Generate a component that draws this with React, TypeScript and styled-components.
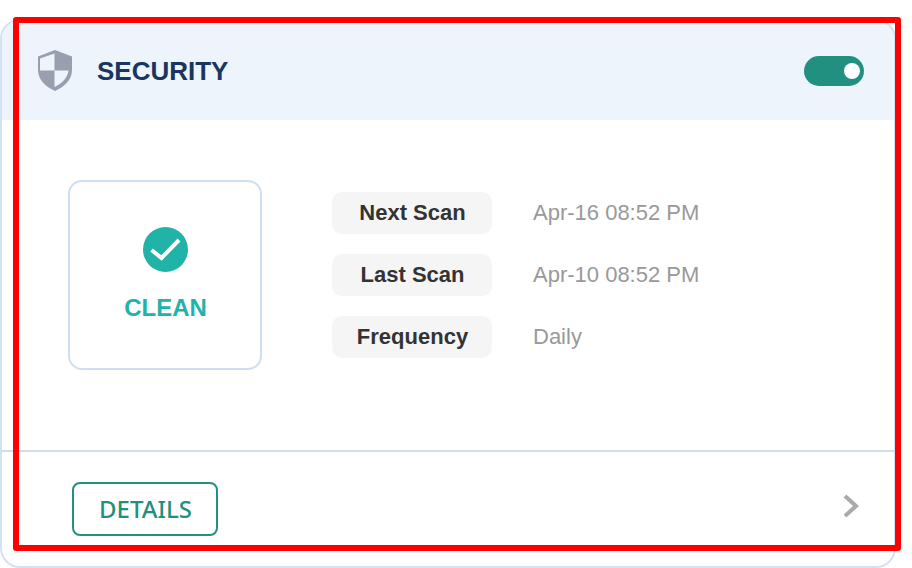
import React, { FC } from 'react';
import styled, { createGlobalStyle } from 'styled-components';

const GlobalStyle = createGlobalStyle`
  html, body {
    margin: 0;
    padding: 0;
    background: #fff;
    overflow: hidden;
  }
  * {
    box-sizing: border-box;
  }
`;

const Page = styled.div`
  position: relative;
  width: 912px;
  height: 568px;
  padding-top: 19px;
  font-family: 'Liberation Sans', Arial, sans-serif;
`;

const Card = styled.section`
  width: 896px;
  height: 549px;
  display: flex;
  flex-direction: column;
  overflow: hidden;
  border: 2px solid #d3e2f2;
  border-radius: 20px;
`;

const Header = styled.header`
  height: 99px;
  flex-shrink: 0;
  display: flex;
  align-items: center;
  padding: 0 30px 0 36px;
  background: #edf4fc;
`;

const ShieldIcon = styled.svg`
  width: 34px;
  height: 41px;
  margin-right: 25px;
  flex-shrink: 0;
`;

const Title = styled.h2`
  flex: 1;
  margin: 2px 0 0;
  font-size: 26px;
  font-weight: 700;
  color: #1a3560;
`;

const Toggle = styled.div`
  width: 60px;
  height: 30px;
  display: flex;
  align-items: center;
  justify-content: flex-end;
  padding-right: 4px;
  border-radius: 15px;
  background: #229080;

  &::after {
    content: '';
    width: 16px;
    height: 16px;
    border-radius: 50%;
    background: #fff;
  }
`;

const Body = styled.div`
  flex: 1;
  display: flex;
  align-items: flex-start;
  padding: 60px 0 0 66px;
`;

const StatusBox = styled.div`
  width: 194px;
  height: 190px;
  display: flex;
  flex-direction: column;
  align-items: center;
  padding-top: 45px;
  margin-right: 70px;
  border: 2px solid #cfdff0;
  border-radius: 14px;
`;

const CheckIcon = styled.svg`
  width: 45px;
  height: 45px;
`;

const StatusText = styled.div`
  margin-top: 22px;
  padding-left: 1px;
  font-size: 24px;
  line-height: 28px;
  font-weight: 700;
  color: #21b2a8;
`;

const ScanList = styled.div`
  display: flex;
  flex-direction: column;
  gap: 20px;
  margin-top: 12px;
`;

const ScanRow = styled.div`
  display: flex;
  align-items: center;
  gap: 41px;
`;

const ScanLabel = styled.div`
  width: 160px;
  height: 42px;
  display: flex;
  align-items: center;
  justify-content: center;
  padding-left: 1px;
  border-radius: 10px;
  background: #f5f5f5;
  font-size: 22px;
  font-weight: 700;
  color: #333;
`;

const ScanValue = styled.div`
  font-size: 22px;
  color: #999;
`;

const Footer = styled.footer`
  height: 116px;
  flex-shrink: 0;
  display: flex;
  align-items: flex-start;
  justify-content: space-between;
  padding: 30px 35px 0 70px;
  border-top: 2px solid #d0dfee;
`;

const DetailsButton = styled.button`
  width: 146px;
  height: 54px;
  padding: 0 0 2px 1px;
  border: 2px solid #229080;
  border-radius: 8px;
  background: #fff;
  font-family: 'Noto Sans', 'Open Sans', sans-serif;
  font-size: 24px;
  font-weight: 500;
  color: #229080;
`;

const ChevronIcon = styled.svg`
  width: 16px;
  height: 24px;
  margin-top: 12px;
`;

const Frame = styled.div`
  position: absolute;
  left: 13px;
  top: 17px;
  width: 888px;
  height: 534px;
  border: 6px solid #ff0000;
  border-radius: 3px;
  pointer-events: none;
`;

const rows = [
  { label: 'Next Scan', value: 'Apr-16 08:52 PM' },
  { label: 'Last Scan', value: 'Apr-10 08:52 PM' },
  { label: 'Frequency', value: 'Daily' },
];

const App: FC = () => {
  return (
    <>
      <GlobalStyle />
      <Page>
        <Card>
          <Header>
            <ShieldIcon viewBox="0 0 34 41">
              <path
                d="M17 0 L34 6.5 V20 C34 30 26 37 17 41 C8 37 0 30 0 20 V6.5 Z"
                fill="#9a9fb0"
              />
              <path d="M16.5 3.5 V20.5 H2 V8.5 Z" fill="#edf4fc" />
              <path
                d="M16.5 20.5 H30.5 C29.5 28 24 33.5 16.5 37 Z"
                fill="#edf4fc"
              />
            </ShieldIcon>
            <Title>SECURITY</Title>
            <Toggle />
          </Header>
          <Body>
            <StatusBox>
              <CheckIcon viewBox="0 0 45 45">
                <circle cx="22.5" cy="22.5" r="22.5" fill="#21b2a8" />
                <path
                  d="M8.5 23 L18.5 31 L36 13"
                  fill="none"
                  stroke="#fff"
                  strokeWidth="4"
                />
              </CheckIcon>
              <StatusText>CLEAN</StatusText>
            </StatusBox>
            <ScanList>
              {rows.map((row) => (
                <ScanRow key={row.label}>
                  <ScanLabel>{row.label}</ScanLabel>
                  <ScanValue>{row.value}</ScanValue>
                </ScanRow>
              ))}
            </ScanList>
          </Body>
          <Footer>
            <DetailsButton>DETAILS</DetailsButton>
            <ChevronIcon viewBox="0 0 16 24">
              <path
                d="M2 2 L13 12 L2 22"
                fill="none"
                stroke="#aaa"
                strokeWidth="4"
              />
            </ChevronIcon>
          </Footer>
        </Card>
        <Frame />
      </Page>
    </>
  );
};

export default App;
